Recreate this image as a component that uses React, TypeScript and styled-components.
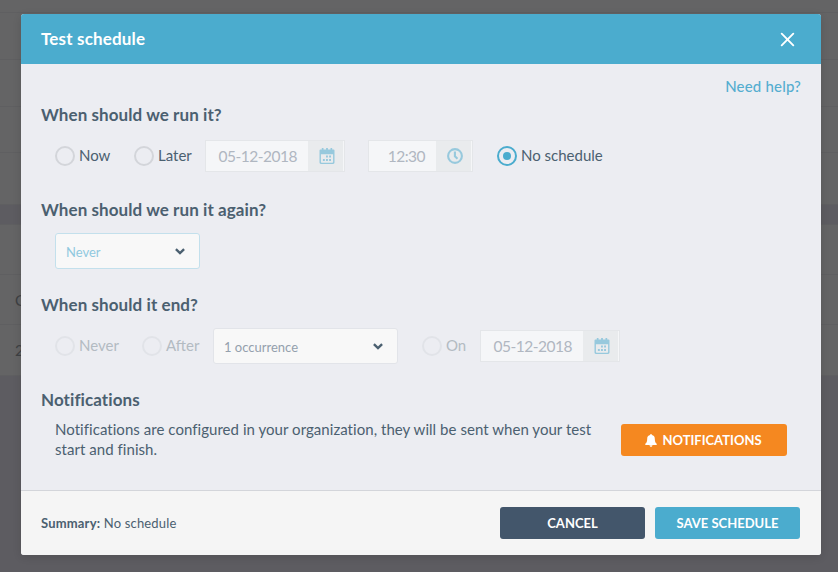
import React from "react";
import styled, { createGlobalStyle } from "styled-components";

const GlobalStyle = createGlobalStyle`
  *, *::before, *::after { box-sizing: border-box; }
  html, body { margin: 0; padding: 0; overflow: hidden; }
  body { font-family: "Lato", sans-serif; font-size: 15px; line-height: 20px; color: #4b6070; }
`;

const Page = styled.div`
  display: grid;
  width: 838px;
  height: 572px;
  background: #5d5c61;
  overflow: hidden;
`;

const Backdrop = styled.div`
  grid-area: 1 / 1;
  display: flex;
  flex-direction: column;
`;

const BackRow = styled.div<{ $h: number; $band?: boolean }>`
  display: flex;
  align-items: center;
  flex: none;
  height: ${(p) => p.$h}px;
  padding-left: 15px;
  border-bottom: 1px solid #5f5f61;
  background: ${(p) => (p.$band ? "#5d5c61" : "#646465")};
  color: #3e4043;
  font-size: 15px;
`;

const Dialog = styled.section`
  grid-area: 1 / 1;
  display: flex;
  flex-direction: column;
  width: 800px;
  height: 541px;
  margin: 14px 0 0 21px;
  border-radius: 3px;
  overflow: hidden;
  background: #ecedf2;
  box-shadow: 0 2px 8px rgba(0, 0, 0, 0.12);
`;

const Header = styled.header`
  display: flex;
  align-items: center;
  justify-content: space-between;
  flex: none;
  height: 50px;
  padding: 0 26px 0 20px;
  background: #4bacce;
  color: #fff;
`;

const Title = styled.h1`
  margin: 0;
  font-size: 17px;
  font-weight: 700;
  line-height: 20px;
  letter-spacing: 0.17px;
`;

const CloseButton = styled.button`
  display: flex;
  padding: 0;
  margin-top: 1px;
  border: 0;
  background: none;
  color: inherit;
`;

const Body = styled.div`
  flex: 1;
  padding: 0 20px;
`;

const HelpRow = styled.div`
  display: flex;
  justify-content: flex-end;
  height: 41px;
  padding-top: 12px;
`;

const HelpLink = styled.a`
  color: #55add0;
  font-weight: 500;
  letter-spacing: 0.18px;
`;

const Section = styled.section`
  height: 95px;
`;

const Heading = styled.h2`
  margin: 0;
  color: #4b6070;
  font-size: 17px;
  font-weight: 700;
  line-height: 20px;
  letter-spacing: 0.08px;
`;

const Controls = styled.div`
  display: flex;
  align-items: center;
  height: 36px;
  margin: 13px 0 0 14px;
`;

const RadioLabel = styled.label<{ $w: number; $disabled?: boolean }>`
  display: flex;
  align-items: center;
  flex: none;
  gap: 4px;
  width: ${(p) => p.$w}px;
  white-space: nowrap;
  color: ${(p) => (p.$disabled ? "#b3bbc2" : "#4b6070")};
`;

const RadioText = styled.span`
  padding-bottom: 2px;
  line-height: 18px;
`;

const Ring = styled.span<{ $state: "on" | "off" | "disabled" }>`
  display: grid;
  place-items: center;
  flex: none;
  width: 20px;
  height: 20px;
  border: 2px solid
    ${(p) => ({ on: "#4bacce", off: "#d3d5da", disabled: "#e1e3e8" })[p.$state]};
  border-radius: 50%;

  &::after {
    content: "";
    width: 8px;
    height: 8px;
    border-radius: 50%;
    background: ${(p) => (p.$state === "on" ? "#4bacce" : "transparent")};
  }
`;

const InputGroup = styled.div<{ $w: number; $after: number }>`
  display: flex;
  flex: none;
  width: ${(p) => p.$w}px;
  height: 32px;
  margin-right: ${(p) => p.$after}px;
  border: 1px solid #e4e6e9;
  background: #f5f6f8;
`;

const InputValue = styled.span`
  flex: 1;
  padding-right: 11px;
  text-align: right;
  line-height: 31px;
  color: #b0b7c1;
  font-size: 15.5px;
  letter-spacing: -0.5px;
`;

const AddOn = styled.span`
  display: grid;
  place-items: center;
  width: 35px;
  padding-left: 2px;
  margin-right: 1px;
  background: #e9ebed;
  color: #97c9dd;
`;

const SelectBox = styled.div<{ $w: number; $accent?: boolean }>`
  display: flex;
  align-items: center;
  justify-content: space-between;
  flex: none;
  width: ${(p) => p.$w}px;
  height: 36px;
  padding: 1px 14px 0 10px;
  border: 1px solid ${(p) => (p.$accent ? "#c3e0ec" : "#e2e4e9")};
  border-radius: 3px;
  background: #f8f8f8;
  color: ${(p) => (p.$accent ? "#90c9df" : "#94a0ad")};
  font-size: 13px;
`;

const Notice = styled.div`
  display: flex;
  align-items: flex-start;
  justify-content: space-between;
  margin: 9px 14px 0 14px;
`;

const NoticeText = styled.p`
  width: 545px;
  margin: 0;
  letter-spacing: 0.045px;
`;

const Footer = styled.footer`
  display: flex;
  align-items: center;
  flex: none;
  height: 65px;
  padding: 0 21px 0 20px;
  gap: 10px;
  border-top: 1px solid #d3d5da;
  background: #f5f5f5;
`;

const Summary = styled.p`
  flex: 1;
  margin: 0;
  font-size: 13px;
  letter-spacing: 0.18px;
`;

const tones = { orange: "#f58820", navy: "#43566b", blue: "#4bacce" };

const Button = styled.button<{ $tone: keyof typeof tones; $w: number }>`
  display: flex;
  align-items: center;
  justify-content: center;
  flex: none;
  gap: 5px;
  width: ${(p) => p.$w}px;
  height: 32px;
  padding: 0;
  border: 0;
  border-radius: 3px;
  background: ${(p) => tones[p.$tone]};
  color: #fff;
  font: 700 13px/20px "Lato", sans-serif;
`;

const NoticeButton = styled(Button)`
  margin-top: 5px;
  padding-right: 1px;
`;

const CloseIcon = () => (
  <svg width="15" height="15" viewBox="0 0 15 15" fill="none" stroke="currentColor" strokeWidth="1.9" strokeLinecap="round">
    <path d="M1.7 1.7 13.3 13.3M13.3 1.7 1.7 13.3" />
  </svg>
);

const CalendarIcon = () => (
  <svg width="16" height="16" viewBox="0 0 16 16" fill="currentColor">
    <path
      fillRule="evenodd"
      d="M2.8 0h1.700v1.600h2.600V0h1.800v1.600h2.600V0h1.700v1.600h1.300a1 1 0 0 1 1 1v12a1.400 1.400 0 0 1-1.400 1.400H1.900a1.400 1.400 0 0 1-1.400-1.400V2.600a1 1 0 0 1 1-1h1.300zM1.900 6.300v7.600a.8.8 0 0 0 .8.8h10.600a.8.8 0 0 0 .8-.8V6.300z"
    />
    <path d="M7 7.600h1.900v2H7zM10.100 7.600h1.900v2h-1.900zM3.900 10.900h1.900v2H3.900zM7 10.900h1.900v2H7zM10.100 10.900h1.900v2h-1.900z" />
  </svg>
);

const ClockIcon = () => (
  <svg width="16" height="16" viewBox="0 0 16 16" fill="none" stroke="currentColor" strokeWidth="2.1">
    <circle cx="8" cy="8" r="6.900" />
    <path d="M7.900 3.600v4.600l2.600 2.500" />
  </svg>
);

const ChevronIcon = () => (
  <svg width="10" height="7" viewBox="0 0 10 7" fill="none" stroke="#4b6070" strokeWidth="2.4">
    <path d="M0.9 1.1 5 5 9.1 1.1" />
  </svg>
);

const BellIcon = () => (
  <svg width="12" height="13" viewBox="0 0 12 13" fill="currentColor">
    <path d="M6 0.1c.6 0 .9.4.9.9 1.900.4 2.900 1.800 2.900 3.700 0 2.700.6 4 1.900 5.100v1.100H.3V9.800c1.300-1.100 1.900-2.400 1.900-5.100 0-1.900 1-3.300 2.900-3.700 0-.5.3-.9.900-.9zM4.500 11.300h3c0 .9-.6 1.500-1.500 1.500s-1.500-.6-1.500-1.500z" />
  </svg>
);

type RadioProps = { label: string; width: number; state: "on" | "off" | "disabled" };

const Radio = ({ label, width, state }: RadioProps) => (
  <RadioLabel $w={width} $disabled={state === "disabled"}>
    <Ring $state={state} />
    <RadioText>{label}</RadioText>
  </RadioLabel>
);

type PickerProps = { value: string; width: number; after?: number; icon: React.ReactNode };

const Picker = ({ value, width, after = 0, icon }: PickerProps) => (
  <InputGroup $w={width} $after={after}>
    <InputValue>{value}</InputValue>
    <AddOn>{icon}</AddOn>
  </InputGroup>
);

const ColumnGap = styled.span`
  flex: none;
  width: 24px;
`;

const backRows: { h: number; band?: boolean; text?: string }[] = [
  { h: 13 },
  { h: 47 },
  { h: 47 },
  { h: 46 },
  { h: 52 },
  { h: 20, band: true },
  { h: 50 },
  { h: 50, text: "C" },
  { h: 51, text: "2" },
];

export default function App() {
  return (
    <>
      <GlobalStyle />
      <Page>
        <Backdrop aria-hidden="true">
          {backRows.map((row, i) => (
            <BackRow key={i} $h={row.h} $band={row.band}>
              {row.text}
            </BackRow>
          ))}
        </Backdrop>

        <Dialog role="dialog" aria-labelledby="dialog-title">
          <Header>
            <Title id="dialog-title">Test schedule</Title>
            <CloseButton aria-label="Close">
              <CloseIcon />
            </CloseButton>
          </Header>

          <Body>
            <HelpRow>
              <HelpLink>Need help?</HelpLink>
            </HelpRow>

            <Section>
              <Heading>When should we run it?</Heading>
              <Controls>
                <Radio label="Now" width={79} state="off" />
                <Radio label="Later" width={71} state="off" />
                <Picker value="05-12-2018" width={140} after={23} icon={<CalendarIcon />} />
                <Picker value="12:30" width={105} after={24} icon={<ClockIcon />} />
                <Radio label="No schedule" width={110} state="on" />
              </Controls>
            </Section>

            <Section>
              <Heading>When should we run it again?</Heading>
              <Controls>
                <SelectBox $w={145} $accent>
                  Never
                  <ChevronIcon />
                </SelectBox>
              </Controls>
            </Section>

            <Section>
              <Heading>When should it end?</Heading>
              <Controls>
                <Radio label="Never" width={87} state="disabled" />
                <Radio label="After" width={71} state="disabled" />
                <SelectBox $w={185}>
                  1 occurrence
                  <ChevronIcon />
                </SelectBox>
                <ColumnGap />
                <Radio label="On" width={58} state="disabled" />
                <Picker value="05-12-2018" width={140} icon={<CalendarIcon />} />
              </Controls>
            </Section>

            <Heading>Notifications</Heading>
            <Notice>
              <NoticeText>
                Notifications are configured in your organization, they will be sent when your test
                start and finish.
              </NoticeText>
              <NoticeButton $tone="orange" $w={166}>
                <BellIcon />
                NOTIFICATIONS
              </NoticeButton>
            </Notice>
          </Body>

          <Footer>
            <Summary>
              <b>Summary:</b> No schedule
            </Summary>
            <Button $tone="navy" $w={145}>
              CANCEL
            </Button>
            <Button $tone="blue" $w={145}>
              SAVE SCHEDULE
            </Button>
          </Footer>
        </Dialog>
      </Page>
    </>
  );
}
